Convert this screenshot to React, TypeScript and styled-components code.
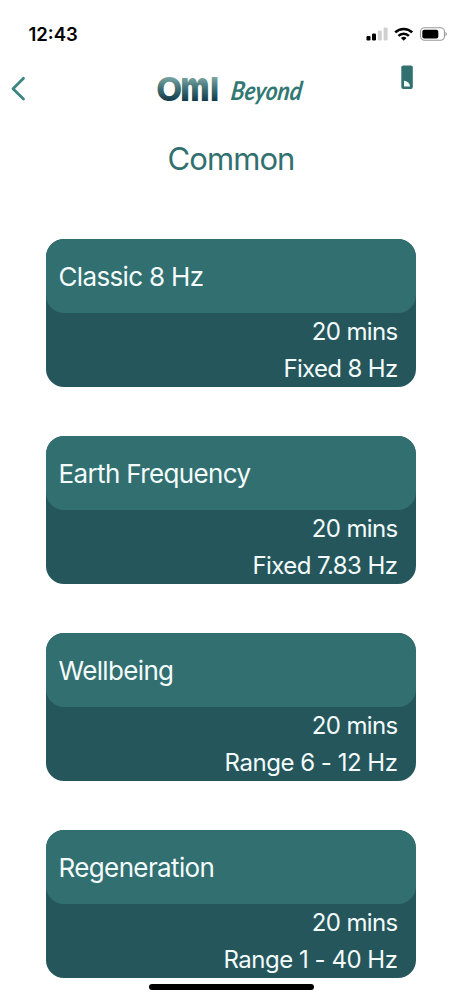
import React from "react";
import styled, { createGlobalStyle } from "styled-components";

const GlobalStyle = createGlobalStyle`
  * { box-sizing: border-box; }
  body { margin: 0; background: #fff; font-family: Inter, "Liberation Sans", sans-serif; }
`;

const Screen = styled.main`
  position: relative;
  width: 462px;
  height: 1000px;
  overflow: hidden;
  background: #fff;
`;

const StatusBar = styled.header`
  display: flex;
  justify-content: space-between;
  align-items: center;
  height: 67px;
  padding: 0 15px 0 28.5px;
`;

const Clock = styled.time`
  font-size: 18.5px;
  font-weight: 600;
  letter-spacing: 0;
  color: #000;
`;

const StatusIcons = styled.svg`
  display: block;
`;

const NavBar = styled.nav`
  display: grid;
  grid-template-columns: 157px 1fr 61px;
  height: 66px;
`;

const BackButton = styled.button`
  display: flex;
  align-items: flex-start;
  padding: 9px 0 0 10px;
  border: 0;
  background: none;
`;

const DeviceIcon = styled.svg`
  display: block;
  margin-top: -2px;
`;

const Logo = styled.svg`
  display: block;
  margin-top: -12px;
`;

const Wordmark = styled.text<{ $fill?: string; $weight?: number }>`
  font-family: Inter, sans-serif;
  font-weight: ${(p) => p.$weight ?? 800};
  fill: url(#${(p) => p.$fill ?? "metal"});
`;

const Script = styled.text`
  font-family: "Brush Script MT", Lato, sans-serif;
  font-size: 26px;
  font-style: italic;
  font-weight: 700;
  fill: #317873;
`;

const Title = styled.h1`
  margin: 0;
  height: 106px;
  font-size: 31px;
  font-weight: 400;
  line-height: 52px;
  letter-spacing: -0.9px;
  text-align: center;
  color: #32706f;
`;

const CardList = styled.section`
  display: flex;
  flex-direction: column;
  gap: 49px;
  padding: 0 46.5px 0 46px;
`;

const Card = styled.article`
  height: 148px;
  flex: none;
  overflow: hidden;
  border-radius: 18px;
  background: #25565c;
  color: #f3fbfb;
`;

const CardTitle = styled.h2<{ $tracking: number }>`
  margin: 0;
  height: 74px;
  padding-left: 12.5px;
  border-radius: 18px;
  background: #326f70;
  font-size: 26px;
  font-weight: 400;
  line-height: 76px;
  letter-spacing: ${(p) => p.$tracking}px;
`;

const Detail = styled.p<{ $tracking: number }>`
  margin: 0;
  padding-right: 18px;
  font-size: 24px;
  line-height: 37px;
  letter-spacing: ${(p) => p.$tracking}px;
  text-align: right;
`;

const HomeIndicator = styled.div`
  position: absolute;
  left: 149px;
  top: 984px;
  width: 165px;
  height: 6px;
  border-radius: 3px;
  background: #000;
`;

const programs = [
  { name: "Classic 8 Hz", range: "Fixed 8 Hz", nameTracking: -0.66, rangeTracking: -0.66 },
  { name: "Earth Frequency", range: "Fixed 7.83 Hz", nameTracking: -0.63, rangeTracking: -0.57 },
  { name: "Wellbeing", range: "Range 6 - 12 Hz", nameTracking: -0.65, rangeTracking: -0.48 },
  { name: "Regeneration", range: "Range 1 - 40 Hz", nameTracking: -0.62, rangeTracking: -0.48 },
];

export default function App() {
  return (
    <>
      <GlobalStyle />
      <Screen>
        <StatusBar>
          <Clock>12:43</Clock>
          <StatusIcons width="82" height="18" viewBox="0 0 82 18">
            <rect x="1.5" y="11" width="4" height="4.5" rx="1.2" />
            <rect x="7" y="8.5" width="4" height="7" rx="1.2" />
            <rect x="12.8" y="5.5" width="4" height="10" rx="1.2" fill="#d0d0d0" />
            <rect x="18.6" y="2.5" width="4" height="13" rx="1.2" fill="#d0d0d0" />
            <g fill="none" stroke="#000" strokeWidth="2.6">
              <path d="M30.2 7.4a12.2 12.2 0 0 1 17 0" />
              <path d="M33.5 10.9a7.4 7.4 0 0 1 10.4 0" />
            </g>
            <path d="M38.7 15.8l-2.8-2.9a4.2 4.2 0 0 1 5.6 0z" />
            <rect x="55.5" y="2.8" width="24" height="12.4" rx="4" fill="none" stroke="#999" strokeWidth="1.1" />
            <rect x="57.3" y="4.7" width="16" height="8.8" rx="2" />
            <path d="M80.5 7v4.2c1.8-.6 1.8-3.6 0-4.2z" fill="#999" />
          </StatusIcons>
        </StatusBar>
        <NavBar>
          <BackButton aria-label="Back">
            <svg width="18" height="26" viewBox="0 0 18 26">
              <path d="M13.5 2.3L3 12.7 13.5 23" fill="none" stroke="#3b8583" strokeWidth="2.8" strokeLinecap="round" strokeLinejoin="round" />
            </svg>
          </BackButton>
          <Logo width="160" height="66" viewBox="0 -12 160 66">
            <defs>
              <linearGradient id="metal" gradientUnits="userSpaceOnUse" x1="0" y1="10" x2="0" y2="34">
                <stop offset="0" stopColor="#7ba5a1" />
                <stop offset="0.5" stopColor="#3d6e73" />
                <stop offset="1" stopColor="#123a47" />
              </linearGradient>
              <linearGradient id="metalScaled" gradientUnits="userSpaceOnUse" x1="0" y1="-24" x2="0" y2="0">
                <stop offset="0" stopColor="#7ba5a1" />
                <stop offset="0.5" stopColor="#3d6e73" />
                <stop offset="1" stopColor="#123a47" />
              </linearGradient>
            </defs>
            <Wordmark x="-0.8" y="34" fontSize="32" textLength="26" lengthAdjust="spacingAndGlyphs">O</Wordmark>
            <g transform="translate(23.6 34) scale(0.73 1)">
              <Wordmark fontSize="42" $fill="metalScaled" $weight={900}>m</Wordmark>
            </g>
            <Wordmark x="53" y="34" fontSize="32">I</Wordmark>
            <g transform="translate(73 33) skewX(-8)">
              <Script textLength="71" lengthAdjust="spacingAndGlyphs">Beyond</Script>
            </g>
          </Logo>
          <DeviceIcon width="12" height="24" viewBox="0 0 12 24">
            <rect x="0.3" y="0.4" width="11.5" height="23.5" rx="2" fill="#32706f" />
            <path d="M3 15.7a6 6 0 0 1 6 5.8H3z" fill="#f4fbfb" />
          </DeviceIcon>
        </NavBar>
        <Title>Common</Title>
        <CardList>
          {programs.map((p) => (
            <Card key={p.name}>
              <CardTitle $tracking={p.nameTracking}>{p.name}</CardTitle>
              <Detail $tracking={-0.65}>20 mins</Detail>
              <Detail $tracking={p.rangeTracking}>{p.range}</Detail>
            </Card>
          ))}
        </CardList>
        <HomeIndicator />
      </Screen>
    </>
  );
}
